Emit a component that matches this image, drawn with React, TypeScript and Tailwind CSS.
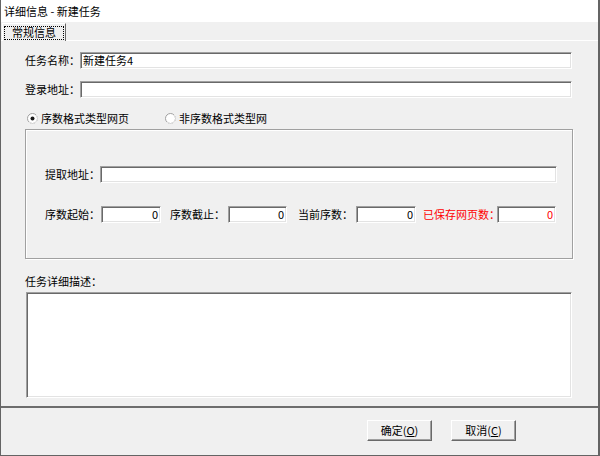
import React from "react";

const sunken =
  "bg-white border border-t-[#a0a0a0] border-l-[#a0a0a0] border-r-white border-b-white shadow-[inset_1px_1px_0_#696969,inset_-1px_-1px_0_#e3e3e3]";

const Field = ({ width, value, number, red }: { width: string; value?: string; number?: boolean; red?: boolean }) => (
  <div
    className={`${width} h-[17px] shrink-0 ${sunken} flex items-center ${number ? "justify-end pr-[2px]" : "pl-[2px]"} ${
      red ? "text-[#ff0000]" : "text-black"
    }`}
  >
    {value}
  </div>
);

const Radio = ({ checked }: { checked?: boolean }) => (
  <svg width="11" height="11" viewBox="0 0 11 11" className="shrink-0">
    <circle cx="5.5" cy="5.5" r="5" fill="white" stroke="#a0a0a0" strokeWidth="1" />
    <path d="M1.9 9.1 A5 5 0 0 0 9.1 1.9" fill="none" stroke="#e3e3e3" strokeWidth="1" />
    {checked && <circle cx="5.5" cy="5.5" r="2" fill="#1a1a1a" />}
  </svg>
);

const Button = ({ label, hotkey }: { label: string; hotkey: string }) => (
  <button className="w-[65px] h-[21px] bg-[#f0f0f0] border border-t-white border-l-white border-r-[#696969] border-b-[#696969] shadow-[inset_-1px_-1px_0_#a0a0a0] flex items-center justify-center text-[11px] leading-none">
    {label}(<span className="underline">{hotkey}</span>)
  </button>
);

export default function App() {
  return (
    <div className="w-[600px] h-[456px] bg-[#f0f0f0] flex flex-col border-l border-r-2 border-b border-[#646464] text-[11px] text-black whitespace-nowrap font-['Noto_Sans_CJK_SC',sans-serif] overflow-hidden">
      {/* title */}
      <div className="h-[22px] shrink-0 bg-white flex items-center pl-[3px]">详细信息 - 新建任务</div>

      {/* tab strip */}
      <div className="h-[18px] shrink-0 relative">
        <div className="absolute left-[1px] top-[1px] h-[18px] w-[64px] z-10 bg-[#f0f0f0] border-t border-l border-t-white border-l-white border-r border-r-[#696969] flex items-center justify-center">
          <span className="w-[60px] h-[14px] border border-dotted border-black flex items-center justify-center leading-none">
            常规信息
          </span>
        </div>
      </div>

      {/* tab page */}
      <div className="h-[368px] shrink-0 border-t border-t-white border-b-2 border-b-[#6d6d6d] pl-[24px] flex flex-col">
        <div className="mt-[11px] h-[17px] flex items-center">
          <span className="w-[55px] shrink-0">任务名称：</span>
          <Field width="w-[492px]" value="新建任务4" />
        </div>
        <div className="mt-[12px] h-[17px] flex items-center">
          <span className="w-[55px] shrink-0">登录地址：</span>
          <Field width="w-[492px]" />
        </div>

        <div className="mt-[13px] h-[14px] flex items-center">
          <div className="ml-[2px] w-[138px] flex items-center gap-[3px]">
            <Radio checked />
            <span>序数格式类型网页</span>
          </div>
          <div className="flex items-center gap-[3px]">
            <Radio />
            <span>非序数格式类型网</span>
          </div>
        </div>

        <div className="mt-[4px] w-[548px] h-[130px] shrink-0 border border-[#a0a0a0] shadow-[1px_1px_0_white,inset_1px_1px_0_white] pl-[19px] flex flex-col">
          <div className="mt-[36px] h-[17px] flex items-center">
            <span className="w-[55px] shrink-0">提取地址：</span>
            <Field width="w-[457px]" />
          </div>
          <div className="mt-[23px] h-[17px] flex items-center">
            <span className="w-[56px] shrink-0">序数起始：</span>
            <Field width="w-[60px]" value="0" number />
            <span className="ml-[9px] w-[58px] shrink-0">序数截止：</span>
            <Field width="w-[59px]" value="0" number />
            <span className="ml-[11px] w-[58px] shrink-0">当前序数：</span>
            <Field width="w-[60px]" value="0" number />
            <span className="ml-[7px] w-[74px] shrink-0 text-[#ff0000]">已保存网页数：</span>
            <Field width="w-[59px]" value="0" number red />
          </div>
        </div>

        <div className="mt-[15px] h-[14px] flex items-center">任务详细描述：</div>
        <div className={`mt-[4px] ml-[1px] w-[546px] h-[106px] shrink-0 ${sunken}`} />
      </div>

      {/* buttons */}
      <div className="flex-1 flex justify-end items-start pt-[12px] pr-[82px] gap-[19px]">
        <Button label="确定" hotkey="O" />
        <Button label="取消" hotkey="C" />
      </div>
    </div>
  );
}
